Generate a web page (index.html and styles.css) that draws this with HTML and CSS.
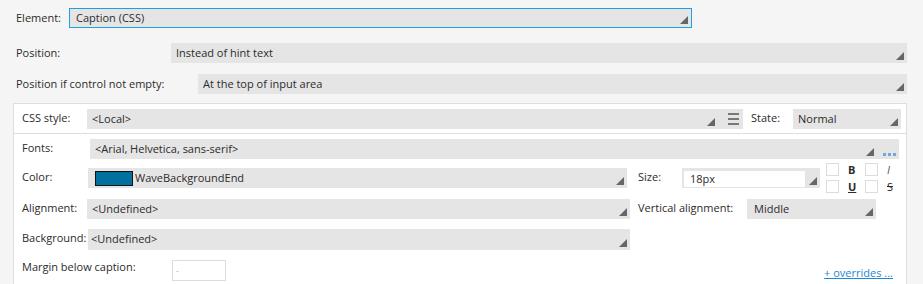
FILE: index.html
```html
<!DOCTYPE html>
<html lang="en">
<head>
  <meta charset="UTF-8" />
  <title>Caption settings</title>
  <link rel="stylesheet" href="styles.css">
</head>
<body>

  <div class="top">
    <div class="row row-element">
      <label class="lbl lbl-element">Element:</label>
      <div class="select select-focus sel-element">Caption (CSS)<span class="tri"></span></div>
    </div>
    <div class="row row-pos">
      <label class="lbl lbl-pos">Position:</label>
      <div class="select sel-wide">Instead of hint text<span class="tri"></span></div>
    </div>
    <div class="row row-pos2">
      <label class="lbl lbl-pos2">Position if control not empty:</label>
      <div class="select sel-wide">At the top of input area<span class="tri"></span></div>
    </div>
  </div>

  <div class="panel">
    <div class="prow prow-css">
      <label class="lbl lbl-css">CSS style:</label>
      <div class="select sel-css">&lt;Local&gt;<span class="tri tri-menu"></span><span class="burger"><i></i><i></i><i></i></span></div>
      <label class="lbl lbl-state">State:</label>
      <div class="select sel-state">Normal<span class="tri"></span></div>
    </div>

    <div class="prow prow-fonts">
      <label class="lbl lbl-fonts">Fonts:</label>
      <div class="select sel-fonts">&lt;Arial, Helvetica, sans-serif&gt;<span class="tri tri-dots"></span><span class="dots"><i></i><i></i><i></i></span></div>
    </div>

    <div class="prow prow-color">
      <label class="lbl lbl-color">Color:</label>
      <div class="select sel-color"><span class="swatch"></span>WaveBackgroundEnd<span class="tri"></span></div>
      <label class="lbl lbl-size">Size:</label>
      <div class="select sel-size"><span class="size-input">18px</span><span class="tri"></span></div>
      <div class="styles">
        <div class="chk"><span class="box"></span><b>B</b></div>
        <div class="chk"><span class="box"></span><em>I</em></div>
        <div class="chk"><span class="box"></span><u>U</u></div>
        <div class="chk"><span class="box"></span><s>S</s></div>
      </div>
    </div>

    <div class="prow prow-align">
      <label class="lbl lbl-align">Alignment:</label>
      <div class="select sel-align">&lt;Undefined&gt;<span class="tri"></span></div>
      <label class="lbl lbl-valign">Vertical alignment:</label>
      <div class="select sel-valign">Middle<span class="tri"></span></div>
    </div>

    <div class="prow prow-bg">
      <label class="lbl lbl-bg">Background:</label>
      <div class="select sel-bg">&lt;Undefined&gt;<span class="tri"></span></div>
    </div>

    <div class="prow prow-margin">
      <label class="lbl lbl-margin">Margin below caption:</label>
      <div class="num-input">-</div>
      <a class="overrides" href="#">+ overrides ...</a>
    </div>
  </div>

</body>
</html>
```

FILE: styles.css
```css
html, body {
  margin: 0;
  padding: 0;
  overflow: hidden;
  background: #f6f5f5;
  font-family: 'Open Sans', 'Noto Sans', sans-serif;
  font-size: 11px;
  color: #2b2b2b;
}

.top {
  padding: 8px 0 0 16px;
}

.row {
  display: flex;
  align-items: center;
  height: 20px;
}

.row-pos { margin-top: 15px; }
.row-pos2 { margin-top: 11px; }

.lbl {
  flex: none;
  white-space: nowrap;
  line-height: 20px;
}

.lbl-element { width: 53px; }
.lbl-pos { width: 155px; }
.lbl-pos2 { width: 182px; }

.select {
  position: relative;
  box-sizing: border-box;
  height: 20px;
  line-height: 20px;
  padding-left: 5px;
  background: #e6e5e5;
  white-space: nowrap;
  flex: none;
}

.tri {
  position: absolute;
  right: 3px;
  bottom: 3px;
  width: 0;
  height: 0;
  border-left: 8px solid transparent;
  border-bottom: 8px solid #666;
}

.select-focus {
  border: 1px solid #1ba1e2;
  padding-left: 6px;
  line-height: 18px;
}

.sel-element { width: 623px; }
.sel-wide { flex: 1; margin-right: 16px; }

.panel {
  margin: 9px 16px 0 13px;
  height: 176px;
  background: #fff;
  border: 1px solid #dedede;
  border-bottom: none;
  padding: 5px 5px 0 8px;
  overflow: hidden;
}

.prow {
  display: flex;
  align-items: flex-start;
  height: 20px;
}

.prow .lbl { line-height: 18px; }

.prow-css {
  margin: 0 -5px 0 -8px;
  padding: 0 5px 4px 8px;
  height: 20px;
  border-bottom: 1px solid #dedede;
}

.lbl-css { width: 65px; }
.sel-css { width: 656px; }
.tri-menu { right: 28px; }

.burger {
  position: absolute;
  right: 4px;
  top: 4px;
  width: 11px;
}

.burger i {
  display: block;
  height: 2px;
  background: #777;
  margin-bottom: 3px;
}

.lbl-state { width: 42px; margin-left: 8px; }
.sel-state { width: 108px; }

.prow-fonts { margin-top: 5px; }
.lbl-fonts { width: 68px; }
.sel-fonts { width: 809px; }
.tri-dots { right: 25px; }

.dots {
  position: absolute;
  right: 3px;
  bottom: 3px;
  display: flex;
  gap: 2px;
}

.dots i {
  width: 3px;
  height: 3px;
  background: #6fa8dc;
}

.prow-color { margin-top: 9px; }
.lbl-color { width: 66px; }
.sel-color {
  width: 539px;
  display: flex;
  align-items: center;
  padding-left: 7px;
}

.swatch {
  box-sizing: border-box;
  width: 38px;
  height: 15px;
  background: #00719c;
  border: 1px solid #111;
  margin-right: 2px;
}

.lbl-size { width: 44px; margin-left: 11px; }
.sel-size { width: 138px; padding: 3px 0 0 2px; }

.size-input {
  display: block;
  box-sizing: border-box;
  width: 121px;
  height: 16px;
  line-height: 16px;
  background: #fff;
  padding-left: 6px;
}

.styles {
  display: grid;
  grid-template-columns: 39px 39px;
  row-gap: 5px;
  margin: -5px 0 0 6px;
}

.chk {
  display: flex;
  align-items: center;
  height: 12px;
  font-size: 11px;
}

.box {
  box-sizing: border-box;
  width: 13px;
  height: 13px;
  border: 1px solid #dcdcdc;
  margin-right: 9px;
}

.chk b, .chk em, .chk u, .chk s {
  font-weight: bold;
  font-style: normal;
}

.chk em { font-weight: normal; font-style: italic; color: #555; }
.chk s { font-weight: normal; }

.prow-align { margin-top: 11px; }
.lbl-align { width: 65px; }
.sel-align { width: 543px; }
.lbl-valign { width: 109px; margin-left: 8px; }
.sel-valign { width: 129px; padding-left: 7px; }

.prow-bg { margin-top: 10px; height: 21px; }
.lbl-bg { width: 66px; }
.sel-bg { width: 542px; height: 21px; padding-left: 3px; }

.prow-margin { margin-top: 10px; }
.lbl-margin { width: 150px; line-height: 14px !important; }

.num-input {
  box-sizing: border-box;
  width: 54px;
  height: 21px;
  border: 1px solid #dcdcdc;
  background: #fff;
  color: #bbb;
  font-size: 9px;
  line-height: 19px;
  padding-left: 3px;
}

.overrides {
  margin-left: auto;
  margin-right: 8px;
  margin-top: 5px;
  color: #1e88d4;
  font-size: 11px;
  text-decoration: underline;
}
```
